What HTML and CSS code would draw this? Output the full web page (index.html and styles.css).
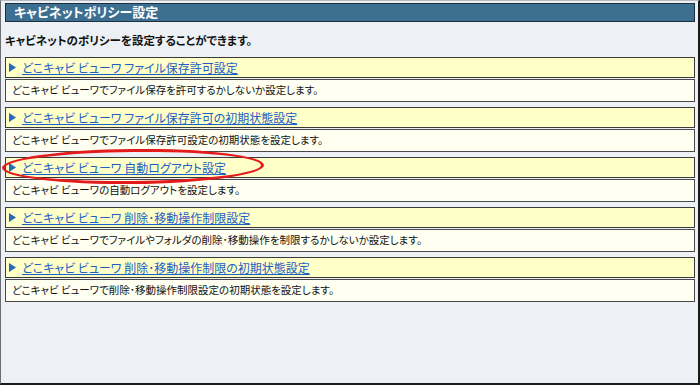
FILE: index.html
```html
<!DOCTYPE html>
<html lang="ja">
<head>
<meta charset="utf-8">
<link rel="stylesheet" href="styles.css">
</head>
<body>
<div class="frame">
  <div class="titlebar">キャビネットポリシー設定</div>
  <p class="lead">キャビネットのポリシーを設定することができます。</p>
  <div class="list">
    <div class="item">
      <div class="head"><svg class="tri" width="7" height="9" viewBox="0 0 7 9"><polygon points="0,0 7,4.5 0,9" /></svg><a href="#">どこキャビ ビューワ ファイル保存許可設定</a></div>
      <div class="desc">どこキャビ ビューワでファイル保存を許可するかしないか設定します。</div>
    </div>
    <div class="item">
      <div class="head"><svg class="tri" width="7" height="9" viewBox="0 0 7 9"><polygon points="0,0 7,4.5 0,9" /></svg><a href="#">どこキャビ ビューワ ファイル保存許可の初期状態設定</a></div>
      <div class="desc">どこキャビ ビューワでファイル保存許可設定の初期状態を設定します。</div>
    </div>
    <div class="item marked">
      <div class="head"><svg class="tri" width="7" height="9" viewBox="0 0 7 9"><polygon points="0,0 7,4.5 0,9" /></svg><a href="#">どこキャビ ビューワ 自動ログアウト設定</a></div>
      <div class="desc">どこキャビ ビューワの自動ログアウトを設定します。</div>
      <span class="circle"></span>
    </div>
    <div class="item">
      <div class="head"><svg class="tri" width="7" height="9" viewBox="0 0 7 9"><polygon points="0,0 7,4.5 0,9" /></svg><a href="#">どこキャビ ビューワ 削除･移動操作制限設定</a></div>
      <div class="desc">どこキャビ ビューワでファイルやフォルダの削除･移動操作を制限するかしないか設定します。</div>
    </div>
    <div class="item">
      <div class="head"><svg class="tri" width="7" height="9" viewBox="0 0 7 9"><polygon points="0,0 7,4.5 0,9" /></svg><a href="#">どこキャビ ビューワ 削除･移動操作制限の初期状態設定</a></div>
      <div class="desc">どこキャビ ビューワで削除･移動操作制限設定の初期状態を設定します。</div>
    </div>
  </div>
</div>
</body>
</html>
```

FILE: styles.css
```css
html, body {
  margin: 0;
  padding: 0;
  background: #edf1f5;
}
body {
  font-family: "Noto Sans CJK JP", "Noto Sans", sans-serif;
  font-feature-settings: "palt";
  color: #111;
}
.frame {
  box-sizing: border-box;
  width: 700px;
  height: 385px;
  border-top: 1px solid #b8bcc0;
  border-left: 1px solid #6a6e72;
  border-right: 2px solid #1a1a1a;
  border-bottom: 2px solid #1a1a1a;
  background: #edf1f5;
  padding: 2px 3px 0 4px;
}
.titlebar {
  box-sizing: border-box;
  height: 19px;
  background: #3d6f90;
  border: 1px solid #1c3040;
  color: #fff;
  font-weight: bold;
  font-size: 13px;
  line-height: 16px;
  padding-left: 8px;
}
.lead {
  margin: 0;
  height: 35px;
  font-size: 11.5px;
  font-weight: bold;
  line-height: 36px;
  padding-left: 0;
}
.list {
  display: flex;
  flex-direction: column;
  gap: 5px;
}
.item {
  position: relative;
  display: flex;
  flex-direction: column;
  gap: 1px;
}
.head {
  box-sizing: border-box;
  height: 21px;
  background: #ffffc8;
  border: 1px solid #3a3a3a;
  display: flex;
  align-items: center;
  padding-left: 2px;
  font-size: 12px;
}
.tri {
  fill: #2768b8;
  margin: 0 6px 0 1px;
}
.head a {
  color: #1d60c6;
  text-decoration: underline;
  line-height: 16px;
}
.desc {
  box-sizing: border-box;
  height: 23px;
  background: #fffff2;
  border: 1px solid #4a4a4a;
  font-size: 10.5px;
  line-height: 20px;
  padding-left: 6px;
}
.circle {
  position: absolute;
  left: -3px;
  top: -8px;
  width: 262px;
  height: 35px;
  border: 3px solid #e31b1b;
  border-radius: 50%;
  box-sizing: border-box;
  transform: rotate(-0.6deg);
}
```
